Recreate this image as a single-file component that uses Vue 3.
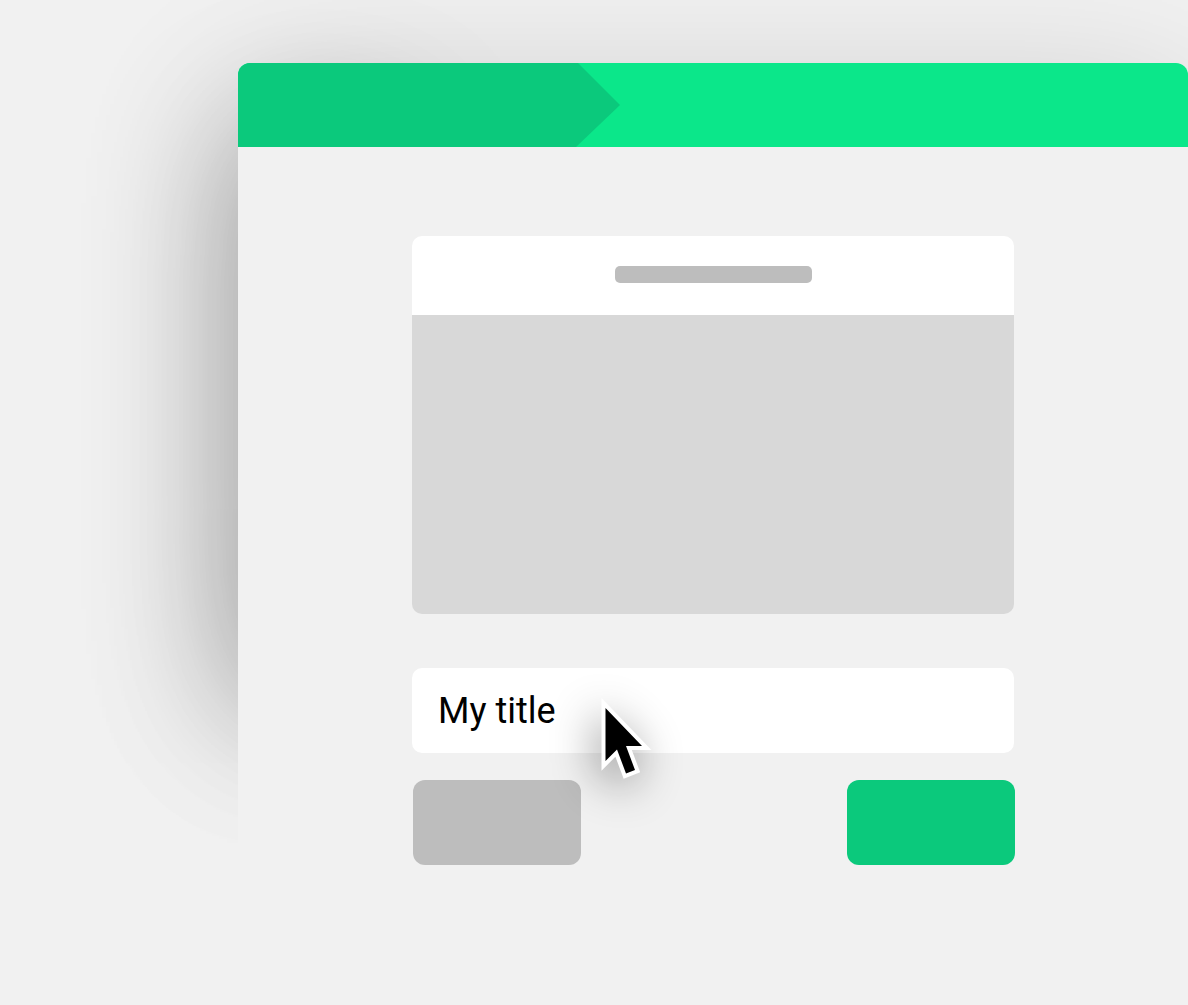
<template>
  <div class="page">
    <div class="window">
      <div class="win-head">
        <div class="win-step"></div>
      </div>

      <div class="win-body">
        <div class="card">
          <div class="card-head">
            <div class="card-bar"></div>
          </div>
          <div class="card-img"></div>
        </div>

        <div class="field">
          <span class="field-text">My title</span>
        </div>

        <div class="actions">
          <div class="btn btn-grey"></div>
          <div class="btn btn-green"></div>
        </div>

        <!-- Mouse pointer over the field -->
        <svg class="pointer" width="60" height="90" viewBox="0 0 60 90">
          <polygon
            points="10.5,13 47,51 31,51 40,75 31,78.5 22,54.5 10.5,66"
            fill="#000"
            stroke="#fff"
            stroke-width="8"
            paint-order="stroke"
          />
        </svg>
      </div>
    </div>
  </div>
</template>

<script setup>
</script>

<style>
body {
  background: #f1f1f1;
}
</style>

<style scoped>
.page {
  position: relative;
  isolation: isolate;
  width: 1188px;
  height: 1005px;
  padding: 63px 0 0 238px;
  box-sizing: border-box;
  overflow: hidden;
  background: #f1f1f1;
  font-family: Roboto, "Liberation Sans", sans-serif;
}

.window {
  width: 950px;
  height: 942px;
  border-radius: 12px 12px 0 0;
  background: #f1f1f1;
}

/* Soft shadows behind the window: a weak wide one and a stronger strip on the left */
.window::before,
.window::after {
  content: '';
  position: absolute;
  z-index: -1;
  left: 238px;
}
.window::before {
  top: 105px;
  width: 950px;
  height: 602px;
  box-shadow: 0 0 150px rgba(0, 0, 0, 0.19);
}
.window::after {
  top: 130px;
  width: 160px;
  height: 577px;
  box-shadow: 0 0 140px rgba(0, 0, 0, 0.26);
}

.win-head {
  height: 84px;
  background: #0be78a;
  border-radius: 12px 12px 0 0;
  overflow: hidden;
}
.win-step {
  width: 382px;
  height: 100%;
  background: #0bc97c;
  clip-path: polygon(0 0, 340px 0, 382px 42px, 338px 84px, 0 84px);
}

.win-body {
  position: relative;
  width: 602px;
  margin-left: 174px;
  padding-top: 89px;
}

.card {
  height: 378px;
  display: flex;
  flex-direction: column;
  border-radius: 10px;
  overflow: hidden;
}
.card-head {
  height: 79px;
  display: flex;
  align-items: center;
  justify-content: center;
  background: #fff;
}
.card-bar {
  width: 197px;
  height: 17px;
  margin-top: -2px;
  border-radius: 5px;
  background: #bdbdbd;
}
.card-img {
  flex: 1;
  background: #d8d8d8;
}

.field {
  height: 85px;
  margin-top: 54px;
  padding-left: 26px;
  display: flex;
  align-items: center;
  border-radius: 10px;
  background: #fff;
}
.field-text {
  font-size: 36px;
  color: #000;
}

.actions {
  display: flex;
  justify-content: space-between;
  margin: 27px -1px 0 1px;
}
.btn {
  width: 168px;
  height: 85px;
  border-radius: 12px;
}
.btn-grey { background: #bdbdbd; }
.btn-green { background: #0bc97c; }

.pointer {
  position: absolute;
  left: 183px;
  top: 548px;
  overflow: visible;
  filter: drop-shadow(-4px 10px 22px rgba(0, 0, 0, 0.42));
}
</style>
